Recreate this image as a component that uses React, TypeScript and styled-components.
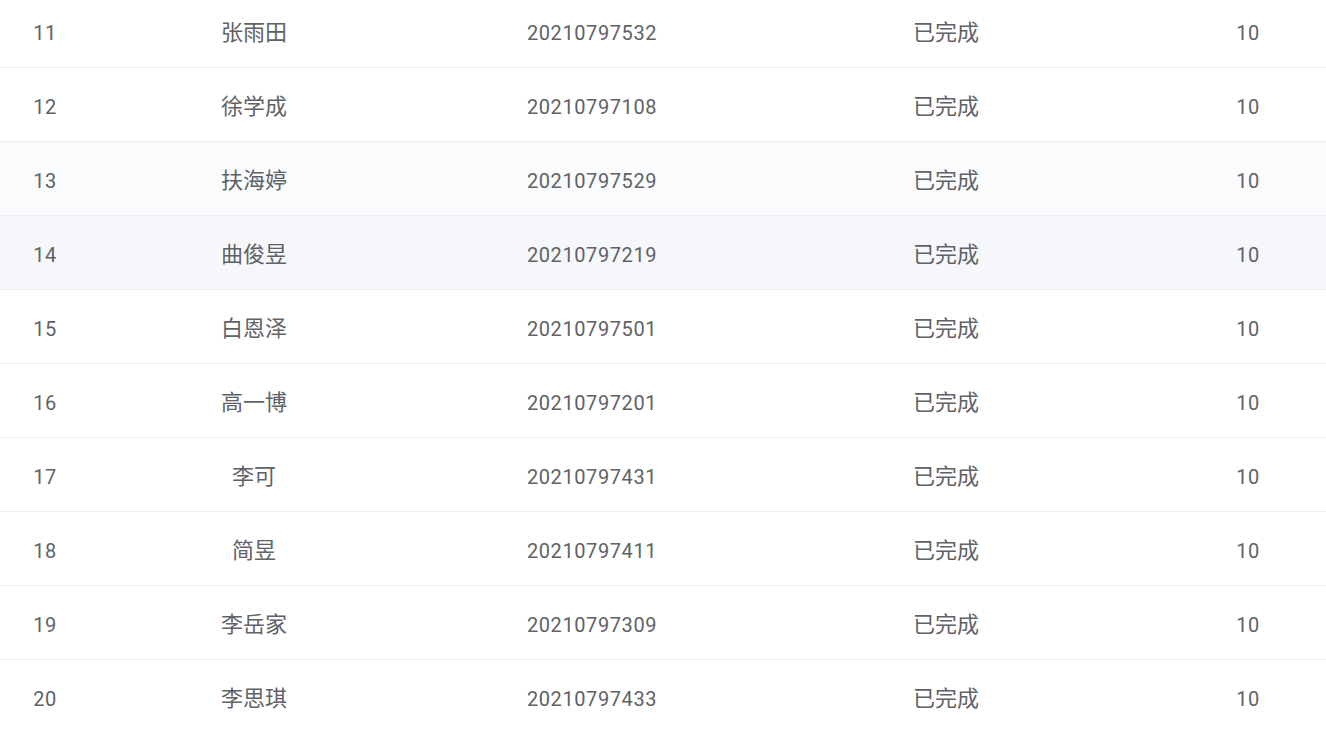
import React from "react";
import styled, { createGlobalStyle } from "styled-components";

const Global = createGlobalStyle`
  html, body { margin: 0; padding: 0; background: #ffffff; overflow: hidden; }
  body { font-family: Roboto, "Noto Sans CJK SC", sans-serif; }
`;

const Viewport = styled.div`
  width: 1326px;
  height: 733px;
  overflow: hidden;
`;

const Table = styled.div`
  width: 1370px;
  margin-top: -6px;
  display: flex;
  flex-direction: column;
`;

type Tone = "plain" | "striped" | "hover";

const Row = styled.div<{ $tone: Tone }>`
  display: grid;
  grid-template-columns: 90px 328px 348px 360px 244px;
  height: 73px;
  border-bottom: 1px solid #ebeef5;
  background: ${(p) =>
    p.$tone === "striped" ? "#fafbfd" : p.$tone === "hover" ? "#f5f7fa" : "#ffffff"};
`;

const Cell = styled.div`
  display: flex;
  align-items: center;
  justify-content: center;
  color: #606266;
  white-space: nowrap;
`;

const Text = styled.span<{ $kind: "num" | "cjk" }>`
  font-family: ${(p) =>
    p.$kind === "num" ? 'Roboto, "Noto Sans CJK SC", sans-serif' : '"Noto Sans CJK SC", sans-serif'};
  font-size: ${(p) => (p.$kind === "num" ? "20px" : "22px")};
  letter-spacing: ${(p) => (p.$kind === "num" ? "0.6px" : "0")};
  line-height: 1.2;
  padding-top: ${(p) => (p.$kind === "num" ? "5px" : "0")};
`;

const rows = [
  ["11", "张雨田", "20210797532"],
  ["12", "徐学成", "20210797108"],
  ["13", "扶海婷", "20210797529"],
  ["14", "曲俊昱", "20210797219"],
  ["15", "白恩泽", "20210797501"],
  ["16", "高一博", "20210797201"],
  ["17", "李可", "20210797431"],
  ["18", "简昱", "20210797411"],
  ["19", "李岳家", "20210797309"],
  ["20", "李思琪", "20210797433"],
];

export default function App() {
  return (
    <Viewport>
      <Global />
      <Table>
        {rows.map(([no, name, id]) => (
          <Row key={no} $tone={no === "13" ? "striped" : no === "14" ? "hover" : "plain"}>
            <Cell><Text $kind="num">{no}</Text></Cell>
            <Cell><Text $kind="cjk">{name}</Text></Cell>
            <Cell><Text $kind="num">{id}</Text></Cell>
            <Cell><Text $kind="cjk">已完成</Text></Cell>
            <Cell><Text $kind="num">10</Text></Cell>
          </Row>
        ))}
      </Table>
    </Viewport>
  );
}
